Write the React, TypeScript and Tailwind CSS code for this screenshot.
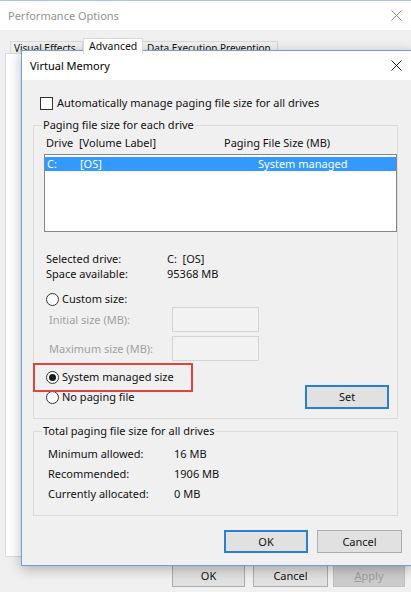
import React from "react";

function CloseIcon({ color }: { color: string }) {
  return (
    <svg width="11" height="11" viewBox="0 0 11 11" className="block">
      <path d="M0.5 0.5L10.5 10.5M10.5 0.5L0.5 10.5" stroke={color} strokeWidth="1" />
    </svg>
  );
}

function Radio({ checked = false }: { checked?: boolean }) {
  return (
    <span className="flex h-[13px] w-[13px] shrink-0 items-center justify-center rounded-full border border-[#333] bg-white">
      {checked && <span className="h-[7px] w-[7px] rounded-full bg-[#1a1a1a]" />}
    </span>
  );
}

function GroupBox({ title, children }: { title: string; children: React.ReactNode }) {
  return (
    <fieldset className="w-[365px] border border-[#dcdcdc] p-0">
      <legend className="ml-[8px] px-[1px] leading-4">{title}</legend>
      {children}
    </fieldset>
  );
}

export default function App() {
  return (
    <div className="relative h-[592px] w-[411px] overflow-hidden bg-[#f0f0f0] font-['Noto_Sans','Open_Sans',sans-serif] text-[11px] leading-4 text-[#111]">
      {/* Performance Options window, behind */}
      <div className="flex h-full flex-col border-t border-[#a9c6e4]">
        <div className="flex h-[29px] items-center justify-between bg-white pl-2 pr-[9px]">
          <span className="text-[11px] text-[#939393]">Performance Options</span>
          <CloseIcon color="#8a8a8a" />
        </div>
        <div className="flex h-[23px] items-end pl-[10px] text-[10px]">
          <div className="h-[12px] w-[73px] border border-b-0 border-[#d9d9d9] pl-[3px] leading-[13px]">Visual Effects</div>
          <div className="relative z-10 -mb-px h-[16px] w-[60px] border border-b-0 border-[#d9d9d9] bg-white pl-[5px] text-[10.5px] leading-[15px]">
            Advanced
          </div>
          <div className="h-[12px] w-[135px] border border-b-0 border-l-0 border-[#d9d9d9] pl-[4px] leading-[13px]">
            Data Execution Prevention
          </div>
        </div>
        <div className="ml-[5px] h-[504px] w-[401px] border border-[#d9d9d9] bg-white" />
        <div className="mt-[7px] flex pl-[172px]">
          <div className="flex h-[23px] w-[73px] items-center justify-center border border-[#adadad] bg-[#e1e1e1]">OK</div>
          <div className="ml-[8px] flex h-[23px] w-[75px] items-center justify-center border border-[#adadad] bg-[#e1e1e1]">
            Cancel
          </div>
          <div className="ml-[5px] flex h-[23px] w-[72px] items-center justify-center border border-[#bfbfbf] bg-[#cccccc] text-[#9d9d9d]">
            <span>
              <span className="underline">A</span>pply
            </span>
          </div>
        </div>
      </div>

      {/* Virtual Memory dialog */}
      <div className="absolute left-[21px] top-[50px] w-[392px] border border-[#6e9fd4] bg-[#f0f0f0] shadow-[0_3px_12px_rgba(0,0,0,0.28)]">
        <div className="flex h-[29px] items-center justify-between bg-white pl-[8px] pr-[10px]">
          <span className="text-[11px] text-black">Virtual Memory</span>
          <CloseIcon color="#222" />
        </div>

        <div className="pb-[12px] pl-[11px] pt-[15px]">
          <label className="ml-[7px] flex h-4 items-center gap-[4px]">
            <span className="h-[13px] w-[13px] border border-[#333] bg-white" />
            <span>Automatically manage paging file size for all drives</span>
          </label>

          <div className="mt-[6px]">
            <GroupBox title="Paging file size for each drive">
              <div className="pb-[9px] pl-[10px]">
                <div className="mt-[2px] flex h-4 pl-[2px]">
                  <span className="w-[33px]">Drive</span>
                  <span className="w-[145px]">[Volume Label]</span>
                  <span>Paging File Size (MB)</span>
                </div>
                <div className="mt-[3px] h-[78px] w-[353px] border border-[#828790] bg-white pt-[2px]">
                  <div className="flex h-[14px] items-center bg-[#3399ff] pl-[2px] leading-[14px] text-white">
                    <span className="w-[33px]">C:</span>
                    <span className="w-[178px]">[OS]</span>
                    <span>System managed</span>
                  </div>
                </div>

                <div className="mt-[19px] pl-[2px] leading-[15px]">
                  <div className="flex">
                    <span className="w-[121px]">Selected drive:</span>
                    <span>C:&nbsp;&nbsp;[OS]</span>
                  </div>
                  <div className="flex">
                    <span className="w-[121px]">Space available:</span>
                    <span>95368 MB</span>
                  </div>
                </div>

                <div className="mt-[10px] flex h-4 items-center gap-[3px] pl-[2px]">
                  <Radio />
                  <span>Custom size:</span>
                </div>
                <div className="flex h-[25px] items-center pl-[5px] text-[#a0a0a0]">
                  <span className="w-[123px]">Initial size (MB):</span>
                  <div className="h-[25px] w-[87px] border border-[#d4d4d4] bg-[#f2f2f2]" />
                </div>
                <div className="mt-[4px] flex h-[25px] items-center pl-[5px] text-[#a0a0a0]">
                  <span className="w-[123px]">Maximum size (MB):</span>
                  <div className="h-[25px] w-[87px] border border-[#d4d4d4] bg-[#f2f2f2]" />
                </div>

                <div className="relative mt-[8px] flex h-4 items-center gap-[3px] pl-[2px]">
                  <div className="absolute left-[-11px] top-[-6px] h-[29px] w-[160px] border-2 border-[#e0443e]" />
                  <Radio checked />
                  <span>System managed size</span>
                </div>
                <div className="flex h-[24px] items-center justify-between pl-[2px] pr-[8px]">
                  <div className="flex items-center gap-[3px]">
                    <Radio />
                    <span>No paging file</span>
                  </div>
                  <div className="flex h-[24px] w-[84px] items-center justify-center border-2 border-[#2a7fd2] bg-[#e1e1e1]">
                    Set
                  </div>
                </div>
              </div>
            </GroupBox>
          </div>

          <div className="mt-[4px]">
            <GroupBox title="Total paging file size for all drives">
              <div className="pb-[11px] pl-[14px] pt-[5px]">
                <div className="flex h-5 items-center">
                  <span className="w-[126px]">Minimum allowed:</span>
                  <span>16 MB</span>
                </div>
                <div className="flex h-5 items-center">
                  <span className="w-[126px]">Recommended:</span>
                  <span>1906 MB</span>
                </div>
                <div className="flex h-5 items-center">
                  <span className="w-[126px]">Currently allocated:</span>
                  <span>0 MB</span>
                </div>
              </div>
            </GroupBox>
          </div>

          <div className="mt-[14px] flex gap-[9px] pl-[191px]">
            <div className="flex h-[23px] w-[84px] items-center justify-center border-2 border-[#2a7fd2] bg-[#e1e1e1]">OK</div>
            <div className="flex h-[23px] w-[85px] items-center justify-center border border-[#adadad] bg-[#e1e1e1]">
              Cancel
            </div>
          </div>
        </div>
      </div>
    </div>
  );
}
